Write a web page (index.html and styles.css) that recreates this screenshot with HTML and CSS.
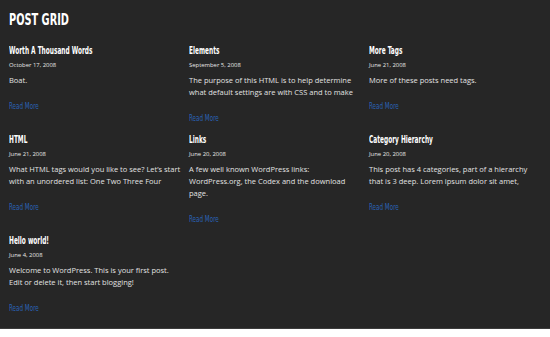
FILE: index.html
```html
<!DOCTYPE html>
<html>
<head>
<meta charset="utf-8">
<link rel="stylesheet" href="styles.css">
</head>
<body>
<div class="page">
  <h1 class="page-title"><span class="condensed">POST GRID</span></h1>
  <div class="grid">
    <article class="post">
      <h2 class="post-title"><span class="condensed">Worth A Thousand Words</span></h2>
      <div class="post-date">October 17, 2008</div>
      <p class="post-excerpt">Boat.</p>
      <a class="read-more" href="#"><span class="condensed">Read More</span></a>
    </article>
    <article class="post">
      <h2 class="post-title"><span class="condensed">Elements</span></h2>
      <div class="post-date">September 5, 2008</div>
      <p class="post-excerpt">The purpose of this HTML is to help determine what default settings are with CSS and to make</p>
      <a class="read-more" href="#"><span class="condensed">Read More</span></a>
    </article>
    <article class="post">
      <h2 class="post-title"><span class="condensed">More Tags</span></h2>
      <div class="post-date">June 21, 2008</div>
      <p class="post-excerpt">More of these posts need tags.</p>
      <a class="read-more" href="#"><span class="condensed">Read More</span></a>
    </article>
    <article class="post">
      <h2 class="post-title"><span class="condensed">HTML</span></h2>
      <div class="post-date">June 21, 2008</div>
      <p class="post-excerpt">What HTML tags would you like to see? Let’s start with an unordered list: One Two Three Four</p>
      <a class="read-more" href="#"><span class="condensed">Read More</span></a>
    </article>
    <article class="post">
      <h2 class="post-title"><span class="condensed">Links</span></h2>
      <div class="post-date">June 20, 2008</div>
      <p class="post-excerpt">A few well known WordPress links: WordPress.org, the Codex and the download page.</p>
      <a class="read-more" href="#"><span class="condensed">Read More</span></a>
    </article>
    <article class="post">
      <h2 class="post-title"><span class="condensed">Category Hierarchy</span></h2>
      <div class="post-date">June 20, 2008</div>
      <p class="post-excerpt">This post has 4 categories, part of a hierarchy that is 3 deep. Lorem ipsum dolor sit amet,</p>
      <a class="read-more" href="#"><span class="condensed">Read More</span></a>
    </article>
    <article class="post">
      <h2 class="post-title"><span class="condensed">Hello world!</span></h2>
      <div class="post-date">June 4, 2008</div>
      <p class="post-excerpt">Welcome to WordPress. This is your first post. Edit or delete it, then start blogging!</p>
      <a class="read-more" href="#"><span class="condensed">Read More</span></a>
    </article>
  </div>
</div>
</body>
</html>
```
FILE: styles.css
```css
html, body {
  margin: 0;
  padding: 0;
  background: #ffffff;
}
.page {
  background: #262626;
  border-bottom: 1px solid #3c3c3c;
  padding: 11px 9px 13px 9px;
  color: #ffffff;
}
.condensed {
  display: inline-block;
  transform-origin: left center;
  white-space: nowrap;
}
.page-title {
  margin: 0 0 14px 0;
  font-family: "DejaVu Sans", sans-serif;
  font-stretch: condensed;
  font-weight: bold;
  font-size: 16px;
  line-height: 18px;
  color: #ffffff;
}
.page-title .condensed {
  transform: scaleX(0.68);
}
.grid {
  display: grid;
  grid-template-columns: repeat(3, 1fr);
  column-gap: 8px;
  row-gap: 7px;
}
.post {
  display: flex;
  flex-direction: column;
  align-items: flex-start;
}
.post-title {
  margin: 0;
  padding-top: 1px;
  font-family: "DejaVu Sans", sans-serif;
  font-stretch: condensed;
  font-weight: bold;
  font-size: 11px;
  line-height: 14px;
  color: #ffffff;
}
.post-title .condensed {
  transform: scaleX(0.59);
}
.post-date {
  margin-top: 2px;
  font-family: "Open Sans", sans-serif;
  font-size: 5.9px;
  line-height: 10px;
  color: #e6e6e6;
}
.post-excerpt {
  margin: 4px 0 0 0;
  font-family: "Open Sans", sans-serif;
  font-size: 7.5px;
  line-height: 12px;
  color: #e2e2e2;
}
.read-more {
  margin-top: 15px;
  font-family: "DejaVu Sans", sans-serif;
  font-stretch: condensed;
  font-size: 8px;
  line-height: 12px;
  color: #2a62b5;
  text-decoration: none;
}
.read-more .condensed {
  transform: scaleX(0.78);
}
```
